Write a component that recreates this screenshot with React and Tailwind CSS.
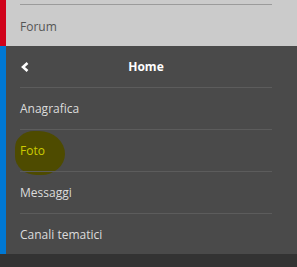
import React from "react";

const items = ["Anagrafica", "Foto", "Messaggi", "Canali tematici"];

const App = () => {
  return (
    <div className="w-[297px] h-[267px] bg-[#333333] font-['Open_Sans',sans-serif] text-[12px] overflow-hidden">
      <div className="h-[46px] bg-[#cbcbcb] border-l-[6px] border-[#d0021b] pl-[14px] pr-[25px]">
        <div className="pt-[4px]">
          <div className="h-px bg-[#9b9b9b]" />
        </div>
        <div className="h-[41px] pt-[3px] flex items-center text-[#555555]">Forum</div>
      </div>
      <div className="h-[208px] bg-[#4a4a4a] border-l-[6px] border-[#0078d4] pl-[14px] pr-[25px]">
        <div className="h-[42px] flex items-center border-b border-[#5c5c5c] relative">
          <svg width="9" height="10" viewBox="0 0 9 10" className="absolute left-[1px] top-[16px]">
            <polyline points="6.5,1 2,5 6.5,9" fill="none" stroke="#ffffff" strokeWidth="2.6" />
          </svg>
          <div className="flex-1 text-center text-white font-bold">Home</div>
        </div>
        {items.map((item, i) => (
          <div key={item} className="relative h-[42px]">
            {item === "Foto" && (
              <div className="absolute left-[-5px] top-[1px] w-[50px] h-[44px] bg-[#4e4b00] rounded-[40%_55%_50%_45%]" />
            )}
            <div
              className={`relative h-[41px] flex items-center ${
                item === "Foto" ? "text-[#cccc00]" : "text-[#dcdcdc]"
              }`}
            >
              {item}
            </div>
            {i < items.length - 1 && <div className="relative h-px bg-[#5c5c5c]" />}
          </div>
        ))}
      </div>
    </div>
  );
};

export default App;
